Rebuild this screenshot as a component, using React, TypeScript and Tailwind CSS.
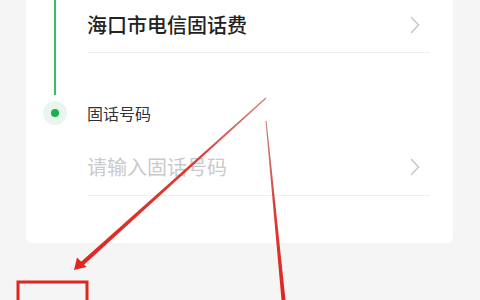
import { ReactNode } from "react";

const FONT = { fontFamily: '"Noto Sans CJK SC", "Noto Sans", sans-serif' };

function Chevron() {
	return (
		<svg width="12" height="18" viewBox="0 0 12 18" fill="none" className="shrink-0">
			<polyline
				points="2.5,1.5 9.5,9 2.5,16.5"
				stroke="#c9c9c9"
				strokeWidth="1.6"
				strokeLinecap="round"
				strokeLinejoin="round"
			/>
		</svg>
	);
}

function Row({ children, className }: { children: ReactNode; className: string }) {
	return (
		<div className={`flex justify-between border-b border-[#efefef] ${className}`}>
			{children}
			<div className="h-[28px] flex items-center pr-[9px]">
				<Chevron />
			</div>
		</div>
	);
}

// 赤い注釈（矢印・枠）はスクリーンショット上のオーバーレイ
function Annotations() {
	return (
		<svg
			className="absolute inset-0 pointer-events-none"
			width="480"
			height="300"
			viewBox="0 0 480 300"
		>
			<defs>
				<linearGradient id="fade1" x1="266" y1="98" x2="75" y2="270" gradientUnits="userSpaceOnUse">
					<stop offset="0" stopColor="#b9463f" stopOpacity="0.7" />
					<stop offset="0.4" stopColor="#d6322a" stopOpacity="0.95" />
					<stop offset="1" stopColor="#e0261d" />
				</linearGradient>
				<linearGradient id="fade2" x1="266" y1="121" x2="284" y2="300" gradientUnits="userSpaceOnUse">
					<stop offset="0" stopColor="#b9524c" stopOpacity="0.7" />
					<stop offset="0.5" stopColor="#d6322a" stopOpacity="0.95" />
					<stop offset="1" stopColor="#e0261d" />
				</linearGradient>
			</defs>
			{/* 矢印1 */}
			<polygon points="266.4,98.4 265.6,97.6 80.5,262.2 83.5,265.2" fill="url(#fade1)" />
			<polygon points="74,270 77,257.5 86.5,267" fill="#e0261d" />
			{/* 線2 */}
			<polygon points="265.5,121 266.6,121 285.5,300 281.5,300" fill="url(#fade2)" />
			{/* 枠 */}
			<rect x="18" y="282" width="69" height="40" fill="none" stroke="#e0261d" strokeWidth="3" />
		</svg>
	);
}

export default function App() {
	return (
		<div className="relative w-[480px] h-[300px] overflow-hidden bg-[#f5f5f5]" style={FONT}>
			<div className="ml-[26px] w-[427px] h-[243px] bg-white rounded-b-[6px] flex">
				{/* タイムライン */}
				<div className="w-[58px] flex flex-col items-center">
					<div className="w-[2px] h-[95px] bg-[#3dbb67]" />
					<div className="mt-[6px] w-[24px] h-[24px] rounded-full bg-[#e9f6ed] flex items-center justify-center">
						<div className="w-[8px] h-[8px] rounded-full bg-[#17b24f]" />
					</div>
				</div>

				<div className="flex-1 ml-[3px] mr-[23px]">
					<Row className="h-[53px] items-center pb-[2px]">
						<span className="text-[20px] leading-[28px] font-medium text-[#222222]">
							海口市电信固话费
						</span>
					</Row>
					<div className="mt-[48px] h-[24px] text-[16px] leading-[24px] text-[#333333]">
						固话号码
					</div>
					<Row className="h-[71px] items-end pb-[14px]">
						<span className="text-[20px] leading-[28px] text-[#cacaca]">请输入固话号码</span>
					</Row>
				</div>
			</div>
			<Annotations />
		</div>
	);
}
